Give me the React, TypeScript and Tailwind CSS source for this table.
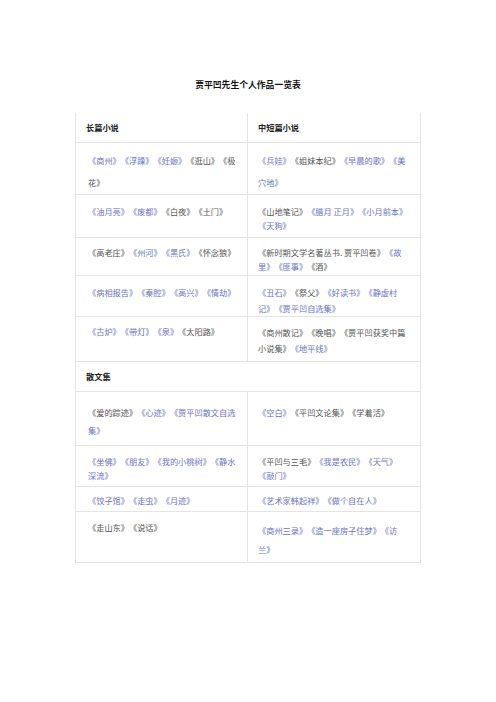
type Work = [string, boolean];

interface Cell {
  items: Work[];
  pad: string;
}

interface Row {
  h: string;
  leading: string;
  left: Cell;
  right: Cell;
}

const B = true;
const G = false;

const novels: Row[] = [
  {
    h: 'h-[52px]',
    leading: 'leading-[22px]',
    left: { pad: 'pt-[6px]', items: [['《商州》', B], ['《浮躁》', B], ['《妊娠》', B], ['《逛山》', G], ['《极花》', G]] },
    right: { pad: 'pt-[6px]', items: [['《兵娃》', B], ['《姐妹本纪》', G], ['《早晨的歌》', B], ['《美穴地》', B]] },
  },
  {
    h: 'h-[43px]',
    leading: 'leading-[14px]',
    left: { pad: 'pt-[9px]', items: [['《油月亮》', B], ['《废都》', B], ['《白夜》', G], ['《土门》', G]] },
    right: { pad: 'pt-[9px]', items: [['《山地笔记》', G], ['《腊月 正月》', B], ['《小月前本》', B], ['《天狗》', B]] },
  },
  {
    h: 'h-[38px]',
    leading: 'leading-[14px]',
    left: { pad: 'pt-[7px]', items: [['《高老庄》', G], ['《州河》', B], ['《黑氏》', B], ['《怀念狼》', G]] },
    right: { pad: 'pt-[7px]', items: [['《新时期文学名著丛书. 贾平凹卷》', G], ['《故里》', B], ['《匪事》', B], ['《酒》', G]] },
  },
  {
    h: 'h-[41px]',
    leading: 'leading-[16px]',
    left: { pad: 'pt-[8px]', items: [['《病相报告》', B], ['《秦腔》', B], ['《高兴》', B], ['《情劫》', B]] },
    right: { pad: 'pt-[8px]', items: [['《丑石》', B], ['《祭父》', G], ['《好读书》', B], ['《静虚村记》', B], ['《贾平凹自选集》', B]] },
  },
  {
    h: 'h-[45px]',
    leading: 'leading-[16px]',
    left: { pad: 'pt-[6px]', items: [['《古炉》', B], ['《带灯》', B], ['《泉》', B], ['《太阳路》', G]] },
    right: { pad: 'pt-[7px]', items: [['《商州散记》', G], ['《晚唱》', G], ['《贾平凹获奖中篇小说集》', G], ['《地平线》', B]] },
  },
];

const essays: Row[] = [
  {
    h: 'h-[54px]',
    leading: 'leading-[18px]',
    left: { pad: 'pt-[11px]', items: [['《爱的踪迹》', G], ['《心迹》', B], ['《贾平凹散文自选集》', B]] },
    right: { pad: 'pt-[11px]', items: [['《空白》', B], ['《平凹文论集》', G], ['《学着活》', G]] },
  },
  {
    h: 'h-[41px]',
    leading: 'leading-[14px]',
    left: { pad: 'pt-[8px]', items: [['《坐佛》', B], ['《朋友》', B], ['《我的小桃树》', B], ['《静水深流》', B]] },
    right: { pad: 'pt-[8px]', items: [['《平凹与三毛》', G], ['《我是农民》', B], ['《天气》', B], ['《敲门》', B]] },
  },
  {
    h: 'h-[25px]',
    leading: 'leading-[14px]',
    left: { pad: 'pt-[6px]', items: [['《饺子馆》', B], ['《走虫》', B], ['《月迹》', B]] },
    right: { pad: 'pt-[6px]', items: [['《艺术家韩起祥》', B], ['《做个自在人》', B]] },
  },
  {
    h: 'h-[51px]',
    leading: 'leading-[19px]',
    left: { pad: 'pt-[6px]', items: [['《走山东》', G], ['《说话》', G]] },
    right: { pad: 'pt-[9px]', items: [['《商州三录》', B], ['《造一座房子住梦》', B], ['《访兰》', B]] },
  },
];

const Works = ({ items }: { items: Work[] }) => (
  <>
    {items.map(([t, blue], i) => (
      <span key={i} className={blue ? 'text-[#6b73c6]' : 'text-[#555555]'}>
        {t}
      </span>
    ))}
  </>
);

const TableRow = ({ row }: { row: Row }) => (
  <div className={`grid grid-cols-2 border-b border-[#e4e4e4] ${row.h} ${row.leading}`}>
    <div className={`border-r border-[#e4e4e4] pl-[12px] pr-[10px] ${row.left.pad}`}>
      <Works items={row.left.items} />
    </div>
    <div className={`pl-[10px] pr-[9px] ${row.right.pad}`}>
      <Works items={row.right.items} />
    </div>
  </div>
);

export default function App() {
  return (
    <div
      className="w-[496px] h-[702px] bg-white text-[8.2px] [text-spacing-trim:space-all]"
      style={{ fontFamily: '"Noto Sans CJK SC", "Noto Sans", sans-serif' }}
    >
      <div className="pt-[78px] pl-[75px] w-[421px]">
        <h1 className="text-center text-[8.8px] font-bold text-[#111] leading-[14px] h-[35px]">
          贾平凹先生个人作品一览表
        </h1>

        <div className="border-x border-[#e4e4e4]">
          <div className="grid grid-cols-2 h-[30px] items-center border-b border-[#e4e4e4] font-bold text-[#222]">
            <div className="pl-[10px] h-full flex items-center border-r border-[#e4e4e4]">长篇小说</div>
            <div className="pl-[10px]">中短篇小说</div>
          </div>

          {novels.map((r, i) => (
            <TableRow key={i} row={r} />
          ))}

          <div className="h-[30px] flex items-center pl-[10px] border-b border-[#e4e4e4] font-bold text-[#222]">
            散文集
          </div>

          {essays.map((r, i) => (
            <TableRow key={i} row={r} />
          ))}
        </div>
      </div>
    </div>
  );
}
